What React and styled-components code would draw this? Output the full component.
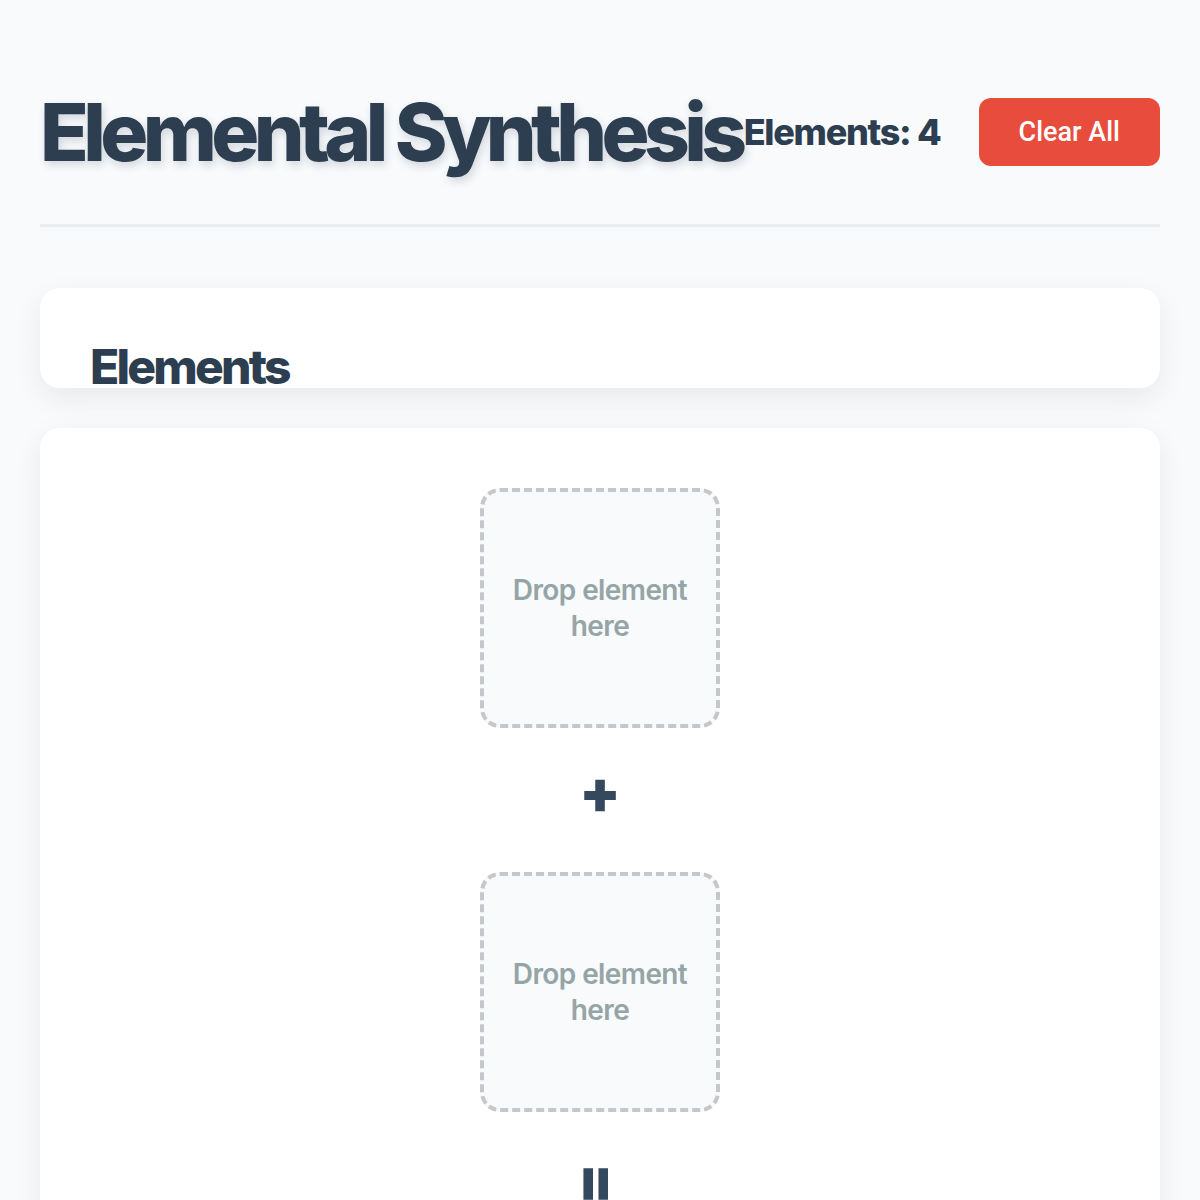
import React from "react";
import styled, { createGlobalStyle } from "styled-components";

const GlobalStyle = createGlobalStyle`
  * {
    box-sizing: border-box;
  }
  body {
    margin: 0;
    background: #f8fafc;
    font-family: "Inter", "Liberation Sans", sans-serif;
    color: #2c3e50;
  }
`;

const Page = styled.div`
  padding: 40px;
`;

const Header = styled.header`
  display: flex;
  align-items: center;
  justify-content: space-between;
  padding: 44px 0 44px;
  border-bottom: 3px solid #e9edf0;
  margin-bottom: 61px;
`;

const Title = styled.h1`
  margin: 0;
  font-size: 80px;
  line-height: 96px;
  font-weight: 800;
  letter-spacing: -5.6px;
  white-space: nowrap;
  color: #2c3e50;
  text-shadow: 2px 4px 8px rgba(44, 62, 80, 0.18);
`;

const Controls = styled.div`
  display: flex;
  align-items: center;
  gap: 38px;
  flex-shrink: 0;
`;

const Counter = styled.span`
  font-size: 36px;
  font-weight: 800;
  letter-spacing: -1.3px;
  white-space: nowrap;
  color: #2c3e50;
`;

const ClearButton = styled.button`
  border: none;
  border-radius: 12px;
  background: #e74c3c;
  color: #fff;
  font-family: "Roboto", "Liberation Sans", sans-serif;
  font-weight: 500;
  font-size: 27px;
  padding: 18px 40px;
  white-space: nowrap;
  flex-shrink: 0;
  cursor: pointer;
`;

const Card = styled.section`
  background: #fff;
  border-radius: 20px;
  box-shadow: 0 10px 30px rgba(0, 0, 0, 0.07);
  margin-bottom: 40px;
`;

const Sidebar = styled(Card)`
  height: 100px;
  overflow: hidden;
  padding: 50px;
`;

const SidebarTitle = styled.h2`
  margin: 0;
  font-size: 48px;
  line-height: 1.2;
  font-weight: 800;
  letter-spacing: -2.8px;
  color: #2c3e50;
`;

const Workbench = styled(Card)`
  padding: 60px 50px;
  display: flex;
  flex-direction: column;
  align-items: center;
  gap: 43px;
`;

const DropZone = styled.div`
  width: 240px;
  height: 240px;
  border: 4px dashed #c3c8cc;
  border-radius: 20px;
  background: #f8fafc;
  display: flex;
  align-items: center;
  justify-content: center;
  text-align: center;
  padding: 20px;
  font-size: 28px;
  line-height: 36px;
  font-weight: 600;
  letter-spacing: -0.6px;
  color: #95a5a6;
`;

const Operator = styled.div`
  font-size: 60px;
  line-height: 58px;
  height: 58px;
  font-weight: 900;
  color: #34495e;
  transform: ${(p) => (p.$rotate ? "rotate(90deg)" : "translateY(-9px)")};
`;

export default function App() {
  return (
    <Page>
      <GlobalStyle />
      <Header>
        <Title>Elemental Synthesis</Title>
        <Controls>
          <Counter>Elements: 4</Counter>
          <ClearButton>Clear All</ClearButton>
        </Controls>
      </Header>
      <Sidebar>
        <SidebarTitle>Elements</SidebarTitle>
      </Sidebar>
      <Workbench>
        <DropZone>Drop element here</DropZone>
        <Operator>+</Operator>
        <DropZone>Drop element here</DropZone>
        <Operator $rotate>=</Operator>
        <DropZone>Result</DropZone>
      </Workbench>
    </Page>
  );
}
